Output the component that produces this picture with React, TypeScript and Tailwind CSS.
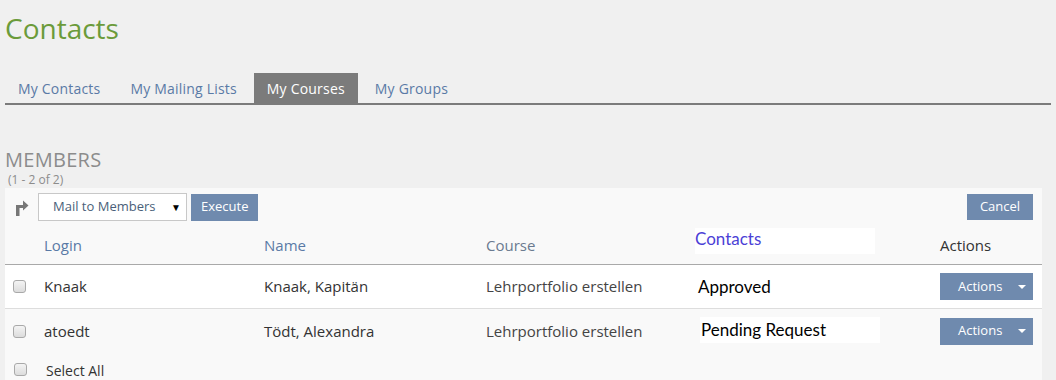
import React from 'react';

const members = [
    { login: 'Knaak', name: 'Knaak, Kapitän', course: 'Lehrportfolio erstellen', status: 'Approved', boxed: false },
    { login: 'atoedt', name: 'Tödt, Alexandra', course: 'Lehrportfolio erstellen', status: 'Pending Request', boxed: true },
];

const tabs = ['My Contacts', 'My Mailing Lists', 'My Courses', 'My Groups'];

const Checkbox = () => (
    <span className="block w-[13px] h-[13px] rounded-[3px] border border-[#a9a9a9] bg-gradient-to-b from-[#f4f4f4] to-[#dcdcdc]"></span>
);

const ArrowIcon = () => (
    <svg width="14" height="17" viewBox="0 0 14 17" className="block">
        <path d="M1 17 V6 H8 V1.5 L13.5 6.5 L8 11.5 V9 H4.5 V17 Z" fill="#777" />
    </svg>
);

export default function App() {
    return (
        <div className="w-[1056px] h-[380px] overflow-hidden bg-[#f0f0f0] font-['Open_Sans',sans-serif] text-[#333]">
            {/* Title */}
            <h1 className="pl-[5px] pt-[7px] text-[28px] leading-[42px] text-[#6b9b3a] font-normal">Contacts</h1>

            {/* Tabs */}
            <div className="mt-[24px] mx-[5px] flex items-end gap-[4px] border-b-2 border-[#7b7b7b] h-[32px]">
                {tabs.map((tab) => (
                    <div
                        key={tab}
                        className={`h-[30px] px-[13px] flex items-center text-[14px] tracking-[0.2px] ${tab === 'My Courses' ? 'bg-[#7b7b7b] text-white' : 'text-[#5a7aa6]'}`}
                    >
                        {tab}
                    </div>
                ))}
            </div>

            {/* Members heading */}
            <div className="mt-[43px] pl-[5px]">
                <div className="h-[24px] text-[20px] leading-[24px] text-[#8c8c8c] uppercase tracking-[0.3px]">Members</div>
                <div className="pl-[3px] text-[12px] leading-[16px] text-[#8c8c8c]">(1 - 2 of 2)</div>
            </div>

            {/* Panel */}
            <div className="mx-[5px] w-[1037px] bg-[#f9f9f9]">
                {/* Toolbar */}
                <div className="h-[38px] flex items-center pl-[10px] pr-[9px]">
                    <ArrowIcon />
                    <div className="ml-[9px] w-[149px] h-[28px] bg-white border border-[#c8c8c8] flex items-center justify-between pl-[14px] pr-[5px] text-[13px] text-[#4a5f7a]">
                        <span>Mail to Members</span>
                        <span className="text-[10px] text-black">▼</span>
                    </div>
                    <button className="ml-[4px] h-[27px] px-[10px] bg-[#6f8aae] text-white text-[13px]">Execute</button>
                    <button className="ml-auto h-[26px] w-[66px] bg-[#6f8aae] text-white text-[13px]">Cancel</button>
                </div>

                {/* Header row */}
                <div className="h-[39px] flex border-b border-[#a9a9a9] text-[15px]">
                    <div className="w-[39px]"></div>
                    <div className="w-[220px] flex items-center text-[#5a7aa6]">Login</div>
                    <div className="w-[222px] flex items-center text-[#5a7aa6]">Name</div>
                    <div className="w-[209px] flex items-center text-[#6a7a90]">Course</div>
                    <div className="w-[245px] flex items-start">
                        <div className="mt-[2px] w-[180px] h-[26px] bg-white font-['Lato',sans-serif] text-[17px] leading-[22px] text-[#4b3fd6]">Contacts</div>
                    </div>
                    <div className="flex items-center text-[#333]">Actions</div>
                </div>

                {/* Rows */}
                {members.map((m, i) => (
                    <div
                        key={m.login}
                        className={`h-[44px] flex items-center text-[15px] ${i === 0 ? 'bg-white border-b border-[#dddddd]' : 'bg-[#f9f9f9]'}`}
                    >
                        <div className="w-[39px] pl-[8px]"><Checkbox /></div>
                        <div className="w-[220px]">{m.login}</div>
                        <div className="w-[222px]">{m.name}</div>
                        <div className="w-[209px] text-[#444]">{m.course}</div>
                        <div className="w-[245px] font-['Lato',sans-serif] text-[17px] text-black">
                            {m.boxed ? (
                                <div className="ml-[5px] -mt-[2px] w-[180px] h-[26px] bg-white pl-[1px] flex items-center">{m.status}</div>
                            ) : (
                                <div className="ml-[3px]">{m.status}</div>
                            )}
                        </div>
                        <button className="w-[93px] h-[27px] bg-[#6f8aae] text-white text-[13px] flex items-center pl-[18px]">
                            <span>Actions</span>
                            <span className="ml-auto mr-[7px] w-0 h-0 border-l-[4px] border-r-[4px] border-t-[4px] border-l-transparent border-r-transparent border-t-white"></span>
                        </button>
                    </div>
                ))}

                {/* Select all */}
                <div className="h-[30px] flex items-center">
                    <div className="w-[41px] pl-[9px] pt-[2px]"><Checkbox /></div>
                    <div className="pt-[6px] text-[14px] leading-[18px]">Select All</div>
                </div>
            </div>
        </div>
    );
}
